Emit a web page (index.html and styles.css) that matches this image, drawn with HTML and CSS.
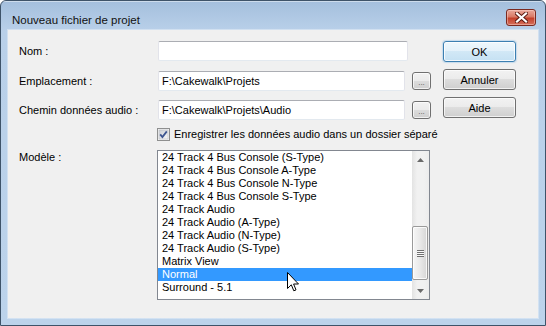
FILE: index.html
```html
<!DOCTYPE html>
<html lang="fr">
<head>
  <meta charset="UTF-8">
  <title>Nouveau fichier de projet</title>
  <link rel="stylesheet" href="styles.css">
</head>
<body>
  <div class="window">
    <div class="titlebar">
      <span class="title">Nouveau fichier de projet</span>
      <button class="close-btn" type="button">
        <svg width="13" height="11" viewBox="0 0 13 11">
          <path d="M2 1.5 L11 9.5 M11 1.5 L2 9.5" stroke="#5a1a12" stroke-width="4" stroke-linecap="square"/>
          <path d="M2 1.5 L11 9.5 M11 1.5 L2 9.5" stroke="#fff" stroke-width="2.2" stroke-linecap="square"/>
        </svg>
      </button>
    </div>

    <div class="client">
      <div class="form">
        <div class="row row-first">
          <label class="label" for="nom">Nom :</label>
          <input class="field field-wide" id="nom" type="text">
        </div>
        <div class="row">
          <label class="label" for="emplacement">Emplacement :</label>
          <input class="field" id="emplacement" type="text" value="F:\Cakewalk\Projets">
          <button class="btn browse-btn" type="button">...</button>
        </div>
        <div class="row">
          <label class="label" for="chemin">Chemin données audio :</label>
          <input class="field" id="chemin" type="text" value="F:\Cakewalk\Projets\Audio">
          <button class="btn browse-btn" type="button">...</button>
        </div>
        <div class="row row-check">
          <span class="checkbox">
            <svg width="13" height="13" viewBox="0 0 13 13">
              <defs>
                <linearGradient id="cb" x1="0" y1="0" x2="1" y2="1">
                  <stop offset="0" stop-color="#cbcfd5"/>
                  <stop offset="1" stop-color="#f7f7f7"/>
                </linearGradient>
              </defs>
              <rect x="0.5" y="0.5" width="12" height="12" fill="#f4f4f4" stroke="#8e8f8f"/>
              <rect x="2" y="2" width="9" height="9" fill="url(#cb)" stroke="#b8bcc4" stroke-width="0.6"/>
              <path d="M3.2 6.4 L5.4 9 L9.8 3.4" fill="none" stroke="#3d5590" stroke-width="1.8"/>
            </svg>
          </span>
          <span class="check-text">Enregistrer les données audio dans un dossier séparé</span>
        </div>
        <div class="row row-list">
          <span class="label">Modèle :</span>
          <div class="listbox">
            <ul class="items">
              <li>24 Track 4 Bus Console (S-Type)</li>
              <li>24 Track 4 Bus Console A-Type</li>
              <li>24 Track 4 Bus Console N-Type</li>
              <li>24 Track 4 Bus Console S-Type</li>
              <li>24 Track Audio</li>
              <li>24 Track Audio (A-Type)</li>
              <li>24 Track Audio (N-Type)</li>
              <li>24 Track Audio (S-Type)</li>
              <li>Matrix View</li>
              <li class="selected">Normal</li>
              <li>Surround - 5.1</li>
            </ul>
            <div class="scrollbar">
              <div class="scroll-arrow">
                <svg width="7" height="4" viewBox="0 0 7 4"><path d="M0 4 L3.5 0 L7 4 Z" fill="#6a6a6a"/></svg>
              </div>
              <div class="scroll-track">
                <div class="thumb">
                  <span class="grip"></span>
                </div>
              </div>
              <div class="scroll-arrow">
                <svg width="7" height="4" viewBox="0 0 7 4"><path d="M0 0 L3.5 4 L7 0 Z" fill="#6a6a6a"/></svg>
              </div>
            </div>
          </div>
        </div>
      </div>

      <div class="actions">
        <button class="btn btn-default" type="button">OK</button>
        <button class="btn" type="button">Annuler</button>
        <button class="btn" type="button">Aide</button>
      </div>
    </div>

    <svg class="cursor" width="13" height="21" viewBox="0 0 13 21">
      <path d="M0.5 0.5 L0.5 16.5 L4.3 12.8 L6.8 18.8 L9 17.9 L6.6 12 L11.5 12 Z" fill="#fff" stroke="#000" stroke-width="1" stroke-linejoin="miter"/>
    </svg>
  </div>
</body>
</html>
```

FILE: styles.css
```css
body {
  margin: 0;
  background-color: #fff;
  font-family: "Liberation Sans", Arial, sans-serif;
  font-size: 11px;
  color: #000;
}
.window {
  position: relative;
  box-sizing: border-box;
  width: 546px;
  height: 326px;
  border: 1px solid #3e5369;
  border-radius: 6px 6px 0 0;
  background: linear-gradient(to bottom, #a4bfdd 0, #b9d0e9 30px, #bcd3eb 100%);
  display: flex;
  flex-direction: column;
  overflow: hidden;
}
.titlebar {
  height: 29px;
  display: flex;
  align-items: flex-start;
  justify-content: space-between;
  padding: 0 9px 0 11px;
  box-shadow: inset 0 1px 0 rgba(255, 255, 255, 0.45);
}
.title {
  padding-top: 12px;
  font-size: 11.5px;
  line-height: 14px;
  color: #111;
}
.close-btn {
  margin-top: 8px;
  width: 30px;
  height: 17px;
  padding: 0;
  border: 1px solid #7b2a20;
  border-radius: 3px;
  background: linear-gradient(to bottom, #e9a99c 0, #d97a66 45%, #c4412b 55%, #d5705c 100%);
  box-shadow: inset 0 0 0 1px rgba(255, 220, 210, 0.45);
  display: flex;
  align-items: center;
  justify-content: center;
}
.client {
  flex: 1;
  margin: 0 7px 7px;
  background-color: #f0f0f0;
  box-shadow: 0 0 0 1px rgba(255, 255, 255, 0.35);
  display: flex;
  padding: 10px 22px 0 11px;
}
.form {
  width: 412px;
  display: flex;
  flex-direction: column;
}
.row {
  display: flex;
  align-items: center;
  height: 22px;
  margin-bottom: 7px;
}
.row-first {
  margin-bottom: 8px;
}
.label {
  width: 139px;
  flex-shrink: 0;
}
.field {
  box-sizing: border-box;
  width: 247px;
  height: 20px;
  padding: 0 3px;
  margin: 0;
  border: 1px solid #e2e3ea;
  border-top-color: #abadb3;
  border-bottom-color: #e3e9ef;
  border-radius: 2px;
  background: #fff;
  font-family: inherit;
  font-size: 11px;
  color: #000;
  outline: none;
}
.field-wide {
  width: 250px;
}
.btn {
  box-sizing: border-box;
  margin: 0;
  padding: 0;
  border: 1px solid #707070;
  border-radius: 3px;
  background: linear-gradient(to bottom, #f2f2f2 0, #ebebeb 50%, #dddddd 50%, #cfcfcf 100%);
  box-shadow: inset 0 0 0 1px rgba(255, 255, 255, 0.7);
  font-family: inherit;
  font-size: 11px;
  font-weight: normal;
  color: #000;
  text-align: center;
}
.browse-btn {
  width: 19px;
  height: 18px;
  margin-left: 7px;
  padding-top: 4px;
  font-size: 8px;
  line-height: 10px;
  color: #555;
}
.row-check {
  height: 20px;
  margin-top: -4px;
  margin-bottom: 6px;
  white-space: nowrap;
}
.checkbox {
  width: 13px;
  height: 13px;
  margin-left: 138px;
  flex-shrink: 0;
  display: flex;
}
.check-text {
  margin-left: 4px;
}
.row-list {
  height: auto;
  align-items: flex-start;
}
.row-list .label {
  width: 138px;
  line-height: 13px;
  padding-top: 1px;
}
.listbox {
  box-sizing: border-box;
  width: 273px;
  height: 150px;
  border: 1px solid #828790;
  background: #fff;
  display: flex;
}
.items {
  list-style: none;
  margin: 0;
  padding: 0;
  flex: 1;
  overflow: hidden;
}
.items li {
  height: 13px;
  line-height: 13px;
  padding-left: 4px;
  white-space: nowrap;
}
.items li.selected {
  background-color: #3399ff;
  color: #fff;
}
.scrollbar {
  width: 17px;
  display: flex;
  flex-direction: column;
  background: linear-gradient(to right, #e3e3e3 0, #f1f1f1 30%, #f1f1f1 70%, #ececec 100%);
}
.scroll-arrow {
  height: 17px;
  display: flex;
  align-items: center;
  justify-content: center;
}
.scroll-track {
  flex: 1;
}
.thumb {
  box-sizing: border-box;
  width: 16px;
  height: 54px;
  margin-top: 58px;
  border: 1px solid #9a9a9a;
  border-radius: 2px;
  background: linear-gradient(to right, #f6f6f6 0, #e9e9e9 50%, #d6d6d6 100%);
  box-shadow: inset 0 0 0 1px rgba(255, 255, 255, 0.8);
  display: flex;
  align-items: center;
  justify-content: center;
}
.grip {
  width: 7px;
  height: 7px;
  background: repeating-linear-gradient(to bottom, #707070 0, #707070 1px, #fafafa 1px, #fafafa 2px);
}
.actions {
  width: 73px;
  margin-left: 12px;
  padding-top: 1px;
  display: flex;
  flex-direction: column;
  gap: 7px;
}
.actions .btn {
  width: 73px;
  height: 21px;
}
.btn-default {
  border-color: #3c7fb1;
  background: linear-gradient(to bottom, #eef7fc 0, #e3f1fa 50%, #d2e8f6 50%, #c5e1f3 100%);
  box-shadow: inset 0 0 0 1px rgba(255, 255, 255, 0.8), 0 0 1px 1px rgba(120, 180, 230, 0.35);
}
.cursor {
  position: absolute;
  left: 286px;
  top: 271px;
}
```
